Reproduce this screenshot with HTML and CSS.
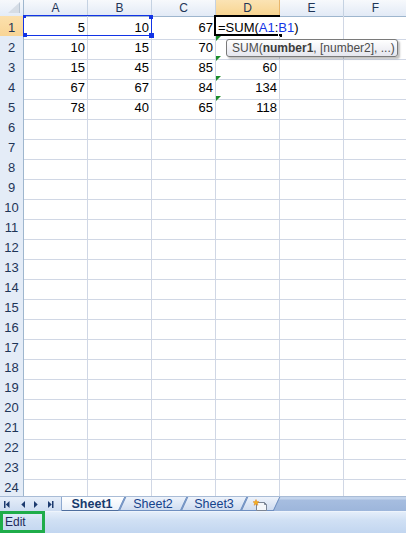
FILE: index.html
```html
<!DOCTYPE html>
<html lang="en">
<head>
  <meta charset="UTF-8" />
  <title>Book1 - Sheet1</title>
  <link rel="stylesheet" href="styles.css">
</head>
<body>
  <div class="excel">
    <div class="grid">
      <div class="row head-row">
        <div class="corner">
          <svg width="23" height="15" viewBox="0 0 23 15"><polygon points="20,2 20,13 8,13" fill="#d6dde6"/><polygon points="20,2 20,13 19,13 19,3.5" fill="#b9c5d3"/></svg>
        </div>
        <div class="col">A</div>
        <div class="col">B</div>
        <div class="col">C</div>
        <div class="col sel">D</div>
        <div class="col">E</div>
        <div class="col">F</div>
      </div>

      <div class="row">
        <div class="rh sel">1</div>
        <div class="c ref">5
          <div class="ref-box">
            <span class="hdl tl"></span><span class="hdl bl"></span><span class="hdl tr"></span><span class="hdl br"></span>
          </div>
        </div>
        <div class="c">10</div>
        <div class="c">67</div>
        <div class="c editing">=SUM(<span class="blue">A1</span>:<span class="blue">B1</span>)
          <div class="active-box"><span class="fill"></span></div>
          <div class="tooltip">SUM(<b>number1</b>, [number2], ...)</div>
        </div>
        <div class="c"></div>
        <div class="c"></div>
      </div>
      <div class="row"><div class="rh">2</div><div class="c">10</div><div class="c">15</div><div class="c">70</div><div class="c err"></div><div class="c"></div><div class="c"></div></div>
      <div class="row"><div class="rh">3</div><div class="c">15</div><div class="c">45</div><div class="c">85</div><div class="c err">60</div><div class="c"></div><div class="c"></div></div>
      <div class="row"><div class="rh">4</div><div class="c">67</div><div class="c">67</div><div class="c">84</div><div class="c err">134</div><div class="c"></div><div class="c"></div></div>
      <div class="row"><div class="rh">5</div><div class="c">78</div><div class="c">40</div><div class="c">65</div><div class="c err">118</div><div class="c"></div><div class="c"></div></div>
      <div class="row"><div class="rh">6</div><div class="c"></div><div class="c"></div><div class="c"></div><div class="c"></div><div class="c"></div><div class="c"></div></div>
      <div class="row"><div class="rh">7</div><div class="c"></div><div class="c"></div><div class="c"></div><div class="c"></div><div class="c"></div><div class="c"></div></div>
      <div class="row"><div class="rh">8</div><div class="c"></div><div class="c"></div><div class="c"></div><div class="c"></div><div class="c"></div><div class="c"></div></div>
      <div class="row"><div class="rh">9</div><div class="c"></div><div class="c"></div><div class="c"></div><div class="c"></div><div class="c"></div><div class="c"></div></div>
      <div class="row"><div class="rh">10</div><div class="c"></div><div class="c"></div><div class="c"></div><div class="c"></div><div class="c"></div><div class="c"></div></div>
      <div class="row"><div class="rh">11</div><div class="c"></div><div class="c"></div><div class="c"></div><div class="c"></div><div class="c"></div><div class="c"></div></div>
      <div class="row"><div class="rh">12</div><div class="c"></div><div class="c"></div><div class="c"></div><div class="c"></div><div class="c"></div><div class="c"></div></div>
      <div class="row"><div class="rh">13</div><div class="c"></div><div class="c"></div><div class="c"></div><div class="c"></div><div class="c"></div><div class="c"></div></div>
      <div class="row"><div class="rh">14</div><div class="c"></div><div class="c"></div><div class="c"></div><div class="c"></div><div class="c"></div><div class="c"></div></div>
      <div class="row"><div class="rh">15</div><div class="c"></div><div class="c"></div><div class="c"></div><div class="c"></div><div class="c"></div><div class="c"></div></div>
      <div class="row"><div class="rh">16</div><div class="c"></div><div class="c"></div><div class="c"></div><div class="c"></div><div class="c"></div><div class="c"></div></div>
      <div class="row"><div class="rh">17</div><div class="c"></div><div class="c"></div><div class="c"></div><div class="c"></div><div class="c"></div><div class="c"></div></div>
      <div class="row"><div class="rh">18</div><div class="c"></div><div class="c"></div><div class="c"></div><div class="c"></div><div class="c"></div><div class="c"></div></div>
      <div class="row"><div class="rh">19</div><div class="c"></div><div class="c"></div><div class="c"></div><div class="c"></div><div class="c"></div><div class="c"></div></div>
      <div class="row"><div class="rh">20</div><div class="c"></div><div class="c"></div><div class="c"></div><div class="c"></div><div class="c"></div><div class="c"></div></div>
      <div class="row"><div class="rh">21</div><div class="c"></div><div class="c"></div><div class="c"></div><div class="c"></div><div class="c"></div><div class="c"></div></div>
      <div class="row"><div class="rh">22</div><div class="c"></div><div class="c"></div><div class="c"></div><div class="c"></div><div class="c"></div><div class="c"></div></div>
      <div class="row"><div class="rh">23</div><div class="c"></div><div class="c"></div><div class="c"></div><div class="c"></div><div class="c"></div><div class="c"></div></div>
      <div class="row"><div class="rh">24</div><div class="c"></div><div class="c"></div><div class="c"></div><div class="c"></div><div class="c"></div><div class="c"></div></div>
    </div>

    <div class="tabbar">
      <div class="tab-nav">
        <svg width="61" height="14" viewBox="0 0 61 14">
          <g fill="#1c3a6e">
            <rect x="4" y="4" width="1.5" height="7"/>
            <polygon points="9.5,4 9.5,11 5.8,7.5"/>
            <polygon points="25,4 25,11 21.3,7.5"/>
            <polygon points="34,4 34,11 37.7,7.5"/>
            <polygon points="48,4 48,11 51.7,7.5"/>
            <rect x="52" y="4" width="1.5" height="7"/>
          </g>
        </svg>
      </div>
      <div class="tabs">
        <div class="tab active">Sheet1</div>
        <div class="tab">Sheet2</div>
        <div class="tab">Sheet3</div>
        <div class="tab new">
          <svg width="16" height="12" viewBox="0 0 16 12">
            <path d="M4.5 3.5 H12.5 L14.5 5.5 V11.5 H4.5 Z" fill="#f4f6f9" stroke="#7b8595"/>
            <path d="M12.5 3.5 V5.5 H14.5" fill="none" stroke="#7b8595"/>
            <path d="M4 0.5 L4.8 2.6 L7 2.8 L5.3 4.1 L5.9 6.3 L4 5 L2.1 6.3 L2.7 4.1 L1 2.8 L3.2 2.6 Z" fill="#f5b31c" stroke="#e0801a" stroke-width="0.5"/>
          </svg>
        </div>
      </div>
    </div>

    <div class="status">
      <span class="mode">Edit</span>
    </div>
  </div>
</body>
</html>
```

FILE: styles.css
```css
:root {
  --grid: #d0d7e5;
  --head-line: #9eb6ce;
  --head-text: #1f3557;
  --ref-blue: #1234e6;
}

* {
  box-sizing: border-box;
  margin: 0;
  padding: 0;
}

body {
  background: #fff;
  font-family: "Liberation Sans", Arial, sans-serif;
  overflow: hidden;
}

.excel {
  display: flex;
  flex-direction: column;
  width: 406px;
  height: 533px;
  overflow: hidden;
}

/* sheet grid */
.row {
  display: grid;
  grid-template-columns: 24px repeat(6, 64px);
  height: 20px;
}

.head-row {
  height: 16px;
}

.corner {
  background: linear-gradient(#f6f8fb, #e4ecf7);
  border-right: 1px solid var(--head-line);
  border-bottom: 1px solid var(--head-line);
}

.corner svg {
  display: block;
}

.col {
  background: linear-gradient(#f7f9fc, #e2eaf6);
  border-right: 1px solid #c5d2e2;
  border-bottom: 1px solid var(--head-line);
  color: var(--head-text);
  font-size: 12px;
  line-height: 16px;
  text-align: center;
}

.col.sel {
  background: linear-gradient(#fbe3b4, #f8d48f);
  border-bottom-color: #f2a33f;
  border-right-color: #e9b66c;
}

.rh {
  background: #e4ecf7;
  border-right: 1px solid var(--head-line);
  border-bottom: 1px solid var(--head-line);
  color: var(--head-text);
  font-size: 13px;
  line-height: 23px;
  text-align: center;
}

.rh.sel {
  background: linear-gradient(#fbe0ad, #f8d392);
  border-bottom-color: #f2a33f;
  border-right-color: #f2a33f;
}

.c {
  border-right: 1px solid var(--grid);
  border-bottom: 1px solid var(--grid);
  color: #000;
  font-size: 13px;
  line-height: 23px;
  text-align: right;
  padding-right: 2px;
  white-space: nowrap;
}

/* formula reference box round A1:B1 */
.ref {
  position: relative;
}

.ref-box {
  position: absolute;
  left: -1px;
  top: -1px;
  width: 129px;
  height: 21px;
  border: 1px solid var(--ref-blue);
  z-index: 3;
}

.hdl {
  position: absolute;
  width: 4px;
  height: 4px;
  background: var(--ref-blue);
}

.hdl.tl { left: -1px; top: -1px; width: 3px; height: 3px; }
.hdl.bl { left: -1px; bottom: -2px; }
.hdl.tr { right: -2px; top: -1px; }
.hdl.br { right: -3px; bottom: -3px; width: 5px; height: 5px; }

/* cell being edited */
.editing {
  position: relative;
  text-align: left;
  padding-left: 2px;
  border-right: none;
  overflow: visible;
}

.blue {
  color: var(--ref-blue);
}

.active-box {
  position: absolute;
  left: -2px;
  top: -1px;
  width: 66px;
  height: 21px;
  border: 2px solid #000;
  border-right: none;
}

.fill {
  position: absolute;
  right: -3px;
  bottom: -4px;
  width: 5px;
  height: 5px;
  background: #000;
  border: 1px solid #fff;
}

.tooltip {
  position: absolute;
  left: 10px;
  top: 23px;
  width: 172px;
  height: 18px;
  padding-left: 5px;
  background: linear-gradient(#ffffff, #e5e6ee);
  border: 1px solid #7a7a7a;
  border-radius: 3px;
  box-shadow: 2px 2px 2px rgba(0, 0, 0, 0.25);
  color: #4c4c4c;
  font-size: 12px;
  line-height: 16px;
  z-index: 5;
}

.tooltip b {
  color: #3c3c3c;
}

/* error indicator */
.err {
  position: relative;
}

.err::before {
  content: "";
  position: absolute;
  left: 0;
  top: 0;
  border-top: 5px solid #1b8d2a;
  border-right: 5px solid transparent;
}

/* sheet tabs */
.tabbar {
  display: flex;
  height: 15px;
  background: linear-gradient(#c3d4ec 0, #c3d4ec 2px, #a6bde0 3px, #9db6db 100%);
  border-top: 1px solid #a9bcd6;
}

.tab-nav {
  width: 62px;
  flex: none;
  background: linear-gradient(#e6eef9, #cddcf1);
  border-right: 1px solid #8ea9d0;
}

.tab-nav svg {
  display: block;
}

.tabs {
  display: flex;
  flex: 1;
  overflow: hidden;
}

.tab {
  position: relative;
  isolation: isolate;
  flex: none;
  width: 62px;
  height: 14px;
  color: #15428b;
  font-size: 12.5px;
  line-height: 14px;
  text-align: center;
}

.tab::before {
  content: "";
  position: absolute;
  inset: 0;
  transform: skewX(-25deg);
  background: linear-gradient(#eef3fb, #cfdcf0);
  border-left: 1px solid #6f8fc0;
  border-right: 1px solid #6f8fc0;
  border-bottom: 1px solid #6f8fc0;
  z-index: -1;
}

.tab.active {
  width: 60px;
  font-weight: bold;
  color: #173a6e;
}

.tab.active::before {
  background: linear-gradient(#ffffff, #eaf0f9);
  border-bottom-color: #4e6e9e;
  left: -6px;
}

.tab:nth-child(3) {
  width: 60px;
}

.tab.new {
  width: 33px;
  padding-top: 2px;
}

.tab.new svg {
  display: block;
  margin-left: 8px;
}

/* status bar */
.status {
  display: flex;
  height: 22px;
  background: linear-gradient(#e4eefa, #d0e0f4 40%, #c2d6f0);
  border-top: 1px solid #eef4fc;
}

.mode {
  width: 45px;
  height: 22px;
  margin-top: -1px;
  border: 3px solid #1fad4a;
  padding-left: 2px;
  color: #1e2a5c;
  font-size: 12px;
  line-height: 16px;
}
```
